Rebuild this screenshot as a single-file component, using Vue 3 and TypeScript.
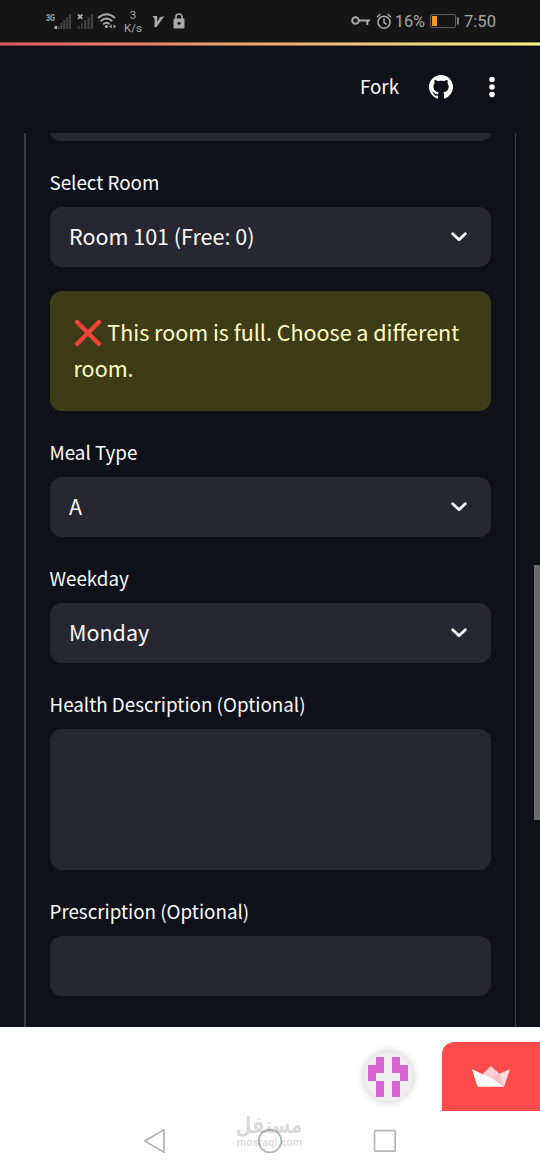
<script setup lang="ts">
interface Field {
  label: string
  value?: string
  kind: 'select' | 'input' | 'area'
}

const roomField: Field = { label: 'Select Room', value: 'Room 101 (Free: 0)', kind: 'select' }
const fields: Field[] = [
  { label: 'Meal Type', value: 'A', kind: 'select' },
  { label: 'Weekday', value: 'Monday', kind: 'select' },
  { label: 'Health Description (Optional)', kind: 'area' },
  { label: 'Prescription (Optional)', kind: 'input' },
]
const signalBars = [3, 6, 9, 12, 15]
</script>

<template>
  <div class="screen">
    <div class="status">
      <div class="status-left">
        <svg class="cell" width="26" height="20" viewBox="0 0 26 20">
          <text x="0" y="8.5" class="net" textLength="9" lengthAdjust="spacingAndGlyphs">3G</text>
          <rect x="8.5" y="14" width="2.5" height="3" fill="#aaa" />
          <rect v-for="(h, i) in signalBars" :key="i" :x="11.5 + i * 2.9" :y="17 - h" width="2" :height="h" fill="#454545" />
        </svg>
        <svg class="cell second" width="18" height="20" viewBox="0 0 18 20">
          <path d="M1 2.5l4.4 4.4M5.4 2.5l-4.4 4.4" stroke="#aaa" stroke-width="1.8" />
          <rect v-for="(h, i) in signalBars" :key="i" :x=".6 + i * 3.3" :y="17 - h" width="2" :height="h" fill="#454545" :opacity="i > 1 ? 1 : 0.8" />
        </svg>
        <svg class="wifi" width="20" height="18" viewBox="0 0 20 18" fill="none" stroke="#aaa" stroke-width="1.9">
          <path d="M1 6Q9.5-1.5 18 6M3.7 9.2Q9.5 4 15.3 9.2M6.2 12.2Q9.5 9.4 12.6 12.2" />
          <circle cx="9.5" cy="14.5" r="1.6" fill="#aaa" stroke="none" />
          <path d="M12.3 14.4l2.4-2.2v4.4zM19 14.4l-2.4-2.2v4.4z" fill="#aaa" stroke="none" />
        </svg>
        <div class="speed"><span>3</span><span>K/s</span></div>
        <svg class="vee" width="13" height="13" viewBox="0 0 13 13"><path d="M.5 1h4.7l.1 6L8 2.2 12.5 1 4.5 12H2.4l.3-8z" fill="#aaa" /></svg>
        <svg class="lock" width="12" height="16" viewBox="0 0 12 16">
          <path d="M3 7V4a3 3 0 0 1 6 0v3" fill="none" stroke="#aaa" stroke-width="1.6" />
          <rect x=".5" y="5.5" width="11" height="10" rx="1.2" fill="#aaa" />
          <circle cx="6" cy="10.3" r="1.5" fill="#151515" />
        </svg>
      </div>
      <div class="status-right">
        <svg width="19" height="12" viewBox="0 0 19 12" fill="none" stroke="#aaa" stroke-width="2">
          <circle cx="4.5" cy="5.5" r="3.3" /><path d="M8 5.5h11M16.3 5.5V10" />
        </svg>
        <svg class="alarm" width="16" height="17" viewBox="0 0 16 17" fill="none" stroke="#aaa" stroke-width="1.5">
          <circle cx="8" cy="9.2" r="6" /><path d="M8 5.6v4l2.8 1.8M1 4.2L4.4 1M15 4.2L11.6 1" />
        </svg>
        <span class="pct">16%</span>
        <svg class="battery" width="29" height="14" viewBox="0 0 29 14">
          <rect x=".5" y=".5" width="25" height="13" rx="1.5" fill="none" stroke="#5d5d5d" />
          <rect x="2" y="2" width="5" height="10" fill="#f39a26" />
          <rect x="27" y="3.5" width="1.8" height="7" fill="#888" />
        </svg>
        <span class="clock">7:50</span>
      </div>
    </div>
    <div class="rainbow"></div>

    <header class="toolbar">
      <span class="fork">Fork</span>
      <svg class="github" width="24" height="24" viewBox="0 0 16 16" fill="#fff">
        <path d="M8 0C3.58 0 0 3.58 0 8c0 3.54 2.29 6.53 5.47 7.59.4.07.55-.17.55-.38 0-.19-.01-.82-.01-1.49-2.01.37-2.53-.49-2.69-.94-.09-.23-.48-.94-.82-1.13-.28-.15-.68-.52-.01-.53.63-.01 1.08.58 1.23.82.72 1.21 1.87.87 2.33.66.07-.52.28-.87.51-1.07-1.78-.2-3.64-.89-3.64-3.95 0-.87.31-1.59.82-2.15-.08-.2-.36-1.02.08-2.12 0 0 .67-.21 2.2.82.64-.18 1.32-.27 2-.27s1.36.09 2 .27c1.53-1.04 2.2-.82 2.2-.82.44 1.1.16 1.92.08 2.12.51.56.82 1.27.82 2.15 0 3.07-1.87 3.75-3.65 3.95.29.25.54.73.54 1.48 0 1.07-.01 1.93-.01 2.2 0 .21.15.46.55.38A8.01 8.01 0 0 0 16 8c0-4.42-3.58-8-8-8z" />
      </svg>
      <svg class="dots" width="6" height="22" viewBox="0 0 6 22" fill="#fff">
        <circle cx="3" cy="3.5" r="2.8" /><circle cx="3" cy="11" r="2.8" /><circle cx="3" cy="18.5" r="2.8" />
      </svg>
    </header>

    <main class="viewport">
      <form class="form">
        <div class="box clipped"></div>
        <div class="field">
          <label>{{ roomField.label }}</label>
          <div class="box select">
            <span>{{ roomField.value }}</span>
            <svg width="16" height="10" viewBox="0 0 16 10"><path d="M1.7 1.7L8 7.7l6.3-6" /></svg>
          </div>
        </div>
        <div class="alert">
          <svg class="cross" width="28" height="28" viewBox="0 0 28 28">
            <path d="M3 3l22 22M25 3L3 25" stroke="#ee4338" stroke-width="4.4" stroke-linecap="round" />
          </svg>
          This room is full. Choose a different room.
        </div>
        <div v-for="f in fields" :key="f.label" class="field">
          <label>{{ f.label }}</label>
          <div class="box" :class="f.kind">
            <template v-if="f.kind === 'select'">
              <span>{{ f.value }}</span>
              <svg width="16" height="10" viewBox="0 0 16 10"><path d="M1.7 1.7L8 7.7l6.3-6" /></svg>
            </template>
          </div>
        </div>
      </form>
      <div class="thumb"></div>
    </main>

    <footer class="footer">
      <div class="badges">
        <div class="avatar">
          <svg width="40" height="40" viewBox="0 0 5 5" fill="#d865d3" shape-rendering="crispEdges">
            <path d="M1 0h1v2H1v1H0V1h1zM3 0h1v1h1v2H4V2H3zM1 3h1v2H1zM3 3h1v2H3z" />
          </svg>
        </div>
        <div class="crown">
          <svg width="40" height="23" viewBox="0 0 40 23">
            <path d="M20 1l-8 7.5v6L33 21.7 28 8.5z" fill="#ffd0d4" />
            <path d="M39 4.2L20.5 12 33 21.7z" fill="#ffdcde" />
            <path d="M20.5 12l8-3.4L33 21.7z" fill="#ffc0c5" />
            <path d="M1 4.2L20 13l13 8.7H6.5z" fill="#fff" />
          </svg>
        </div>
      </div>
      <nav class="nav">
        <svg width="24" height="26" viewBox="0 0 24 26"><path d="M21 1.8v22.5L1.8 13z" /></svg>
        <svg width="26" height="26" viewBox="0 0 26 26"><circle cx="13" cy="13" r="11.4" /></svg>
        <svg width="24" height="24" viewBox="0 0 24 24"><rect x="1.6" y="1.6" width="20.6" height="20.6" rx="1" /></svg>
      </nav>
      <div class="watermark"><span class="ar" lang="ar">مستقل</span><span class="en">mostaql.com</span></div>
    </footer>
  </div>
</template>

<style>
body { margin: 0; background: #0e1117; }
</style>

<style scoped>
* { box-sizing: border-box; }
.screen { width: 540px; height: 1170px; overflow: hidden; display: flex; flex-direction: column; background: #0e1117; color: #fafafa; font-family: "Noto Sans CJK SC", "Noto Sans", sans-serif; }
svg { display: block; flex: none; }
.status { height: 42px; background: #151515; display: flex; justify-content: space-between; padding: 0 44px 0 46px; color: #a5a5a5; font-family: Roboto, sans-serif; }
.status-left, .status-right { display: flex; align-items: center; }
.net { font: bold 9px Roboto, sans-serif; fill: #aaa; }
.cell { margin-top: 2px; }
.second { margin-left: 5px; }
.wifi { margin-left: 2px; }
.speed { width: 20px; margin-left: 6px; display: flex; flex-direction: column; align-items: center; font-size: 11.5px; line-height: 13.5px; padding-top: 2px; }
.vee { margin-left: 9px; }
.lock { margin-left: 8px; }
.alarm { margin-left: 6px; }
.pct { font-size: 16.3px; margin-left: 3px; padding-top: 1px; }
.battery { margin-left: 5px; }
.clock { font-size: 16.6px; margin-left: 5px; padding-top: 1px; }
.rainbow { height: 4px; background: linear-gradient(90deg, #e5595b, #eeaa72 50%, #fbf583); border-top: 1px solid rgba(20, 20, 20, .45); border-bottom: 1px solid rgba(14, 17, 23, .45); }
.toolbar { height: 87px; display: flex; align-items: center; justify-content: flex-end; padding: 0 45px 5px 0; }
.fork { font-size: 18.8px; line-height: 28px; padding-bottom: 2px; }
.github { margin-left: 30px; }
.dots { margin-left: 36px; }
.viewport { height: 894px; position: relative; overflow: hidden; padding: 0 24px; }
.form { height: 100%; border: solid #3a3c43; border-width: 0 1.5px; border-left-width: 2px; padding: 0 24.5px 0 23.5px; display: flex; flex-direction: column; gap: 24px; }
.box { background: #262730; border-radius: 12px; height: 60px; }
.clipped { height: 8px; flex: none; border-radius: 0 0 12px 12px / 0 0 8px 8px; }
.field { display: flex; flex-direction: column; gap: 6px; }
label { height: 36px; line-height: 34px; font-size: 18.8px; white-space: nowrap; }
.select { display: flex; align-items: center; justify-content: space-between; padding: 0 23.5px 0 19.5px; font-size: 21.5px; line-height: 36px; }
.select span { padding-bottom: 2px; }
.select path { fill: none; stroke: #fafafa; stroke-width: 2.8; stroke-linecap: round; stroke-linejoin: round; }
.area { height: 141px; }
.alert { height: 120px; flex: none; border-radius: 12px; background: #3e3b17; color: #ffffc2; padding: 23px 24px 25px; font-size: 21.5px; line-height: 36px; }
.cross { display: inline-block; vertical-align: -6px; margin-right: 1px; }
.thumb { position: absolute; right: 0; top: 432px; width: 6px; height: 255px; background: #6b6b6b; }
.footer { height: 143px; background: #fff; position: relative; padding-top: 15px; }
.badges { display: flex; align-items: center; justify-content: flex-end; gap: 29px; }
.avatar { width: 49px; height: 49px; border-radius: 50%; background: #f0f0f0; display: flex; align-items: center; justify-content: center; box-shadow: 0 0 7px 2px rgba(0, 0, 0, .14); }
.crown { width: 98.5px; height: 69px; border-radius: 12px 0 0 0; background: #ff4b4b; display: flex; align-items: center; justify-content: center; }
.nav { display: flex; align-items: center; justify-content: space-between; height: 59px; padding: 0 143px; }
.nav svg { fill: none; stroke: #b5b5b5; stroke-width: 1.7; stroke-linejoin: round; }
.watermark { position: absolute; left: 236px; top: 87px; width: 67px; display: flex; flex-direction: column; align-items: center; color: rgba(130, 130, 130, .3); white-space: nowrap; }
.ar { font: bold 23px/23px "DejaVu Sans", sans-serif; transform: scaleX(.79); }
.en { font: bold 10.6px/11px "Liberation Sans", sans-serif; }
</style>
